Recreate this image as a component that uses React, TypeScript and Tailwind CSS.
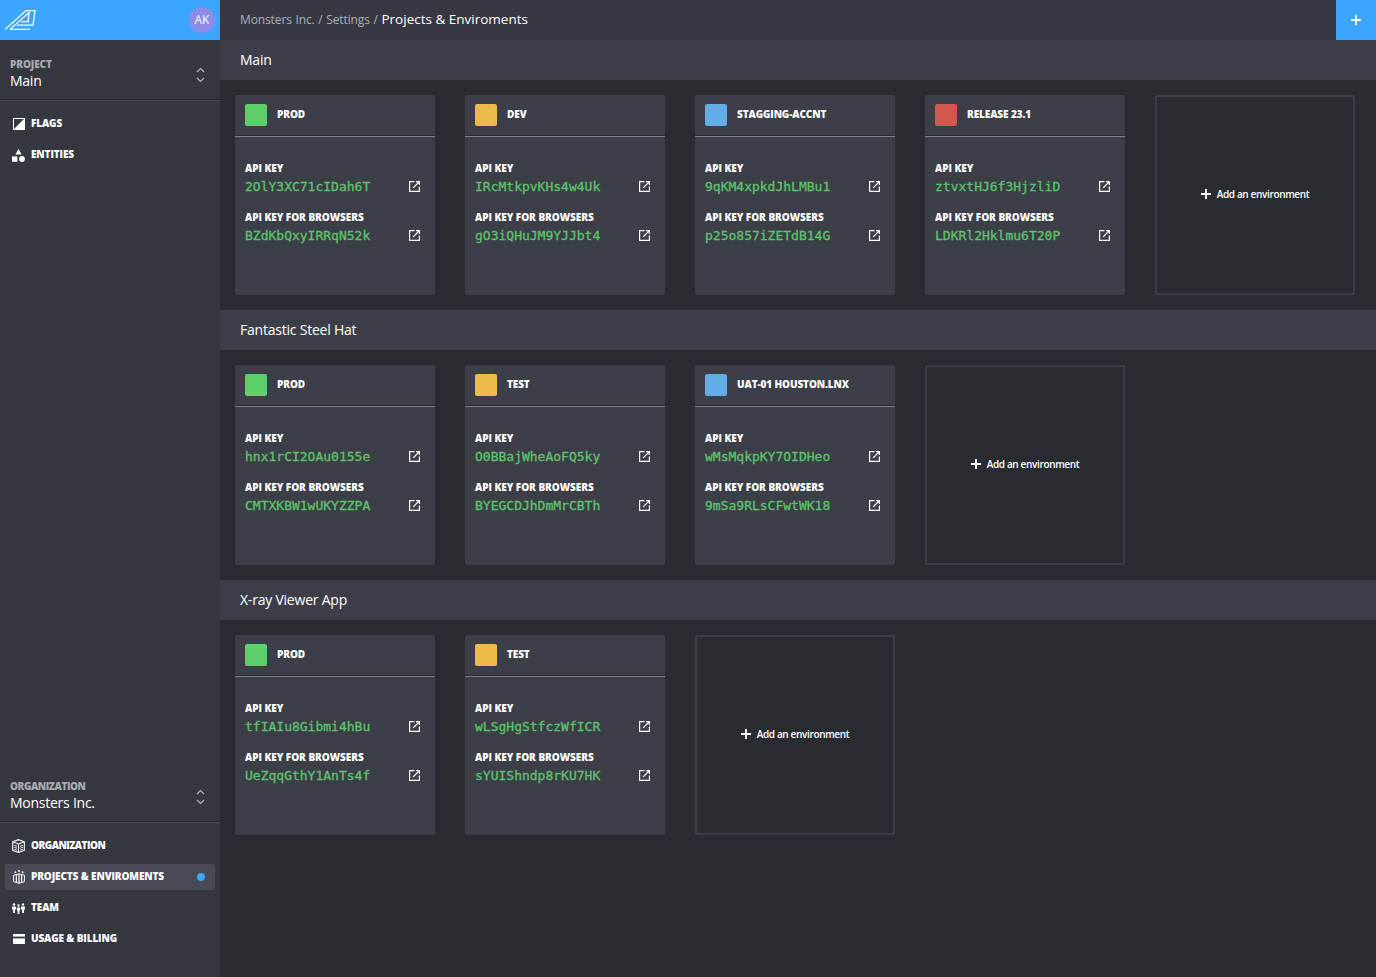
import React from "react";

const SANS = "font-['Open_Sans','Noto_Sans',sans-serif]";

type Env = { name: string; color: string; k1: string; k2: string };
type Project = { title: string; envs: Env[] };

const G = "bg-[#5fcf6b]";
const Y = "bg-[#ecb94a]";
const B = "bg-[#62ade6]";
const R = "bg-[#d2584e]";

const projects: Project[] = [
  {
    title: "Main",
    envs: [
      { name: "PROD", color: G, k1: "2OlY3XC71cIDah6T", k2: "BZdKbQxyIRRqN52k" },
      { name: "DEV", color: Y, k1: "IRcMtkpvKHs4w4Uk", k2: "gO3iQHuJM9YJJbt4" },
      { name: "STAGGING-ACCNT", color: B, k1: "9qKM4xpkdJhLMBu1", k2: "p25o857iZETdB14G" },
      { name: "RELEASE 23.1", color: R, k1: "ztvxtHJ6f3HjzliD", k2: "LDKRl2Hklmu6T20P" },
    ],
  },
  {
    title: "Fantastic Steel Hat",
    envs: [
      { name: "PROD", color: G, k1: "hnx1rCI2OAu0155e", k2: "CMTXKBW1wUKYZZPA" },
      { name: "TEST", color: Y, k1: "O0BBajWheAoFQ5ky", k2: "BYEGCDJhDmMrCBTh" },
      { name: "UAT-01 HOUSTON.LNX", color: B, k1: "wMsMqkpKY7OIDHeo", k2: "9mSa9RLsCFwtWK18" },
    ],
  },
  {
    title: "X-ray Viewer App",
    envs: [
      { name: "PROD", color: G, k1: "tfIAIu8Gibmi4hBu", k2: "UeZqqGthY1AnTs4f" },
      { name: "TEST", color: Y, k1: "wLSgHgStfczWfICR", k2: "sYUIShndp8rKU7HK" },
    ],
  },
];

function ExternalIcon() {
  return (
    <svg width="11" height="11" viewBox="0 0 11 11" fill="none" stroke="#fff" strokeWidth="1.2" className="shrink-0">
      <path d="M5.5 .6H.6v9.8h9.8V5.5" />
      <path d="M4.2 6.8 10 1M7 .6h3.4V4" />
    </svg>
  );
}

function Plus({ size = 10 }: { size?: number }) {
  return (
    <svg width={size} height={size} viewBox="0 0 10 10" stroke="#fff" strokeWidth="1.8" className="shrink-0">
      <path d="M5 0v10M0 5h10" />
    </svg>
  );
}

function Chevrons() {
  return (
    <svg width="9" height="16" viewBox="0 0 9 16" fill="none" stroke="#b4b6bb" strokeWidth="1.2" className="shrink-0">
      <path d="M1 5 4.5 1.5 8 5M1 11l3.5 3.5L8 11" />
    </svg>
  );
}

function Logo() {
  return (
    <svg width="31" height="20" viewBox="0 0 31 20" fill="none" stroke="#fff" strokeWidth="1.25">
      <path d="M0 19.5 21 .6h9L28 15H12" />
      <path d="M5 19.4h20" />
      <path d="M5 19.4 24 2.5 23 11.5H16" />
    </svg>
  );
}

function NavIcon({ kind }: { kind: string }) {
  if (kind === "flags")
    return (
      <svg width="12" height="12" viewBox="0 0 12 12">
        <rect x="0" y="0" width="12" height="12" fill="#fff" />
        <path d="M1 1h10L1 11z" fill="#363840" />
      </svg>
    );
  if (kind === "entities")
    return (
      <svg width="13" height="13" viewBox="0 0 13 13" fill="#fff">
        <path d="M6.5 0 9.6 5.5H3.4z" />
        <rect x="0" y="7.4" width="5.4" height="5.4" />
        <circle cx="10" cy="10" r="2.9" />
      </svg>
    );
  if (kind === "org")
    return (
      <svg width="13" height="14" viewBox="0 0 13 14" fill="none" stroke="#fff" strokeWidth="1.1">
        <path d="M.7 2.8 6.5.7l5.8 2.1v8.6l-5.8 2.1-5.8-2.1z" />
        <path d="M.7 2.8l5.8 2.1 5.8-2.1M6.5 4.9v8.6" />
        <path d="M2.2 6.4 5 7.2M2.2 8.4 5 9.2M2.2 10.4 5 11.2M8 7.2l2.8-.8M8 9.2l2.8-.8M8 11.2l2.8-.8" strokeWidth=".9" />
      </svg>
    );
  if (kind === "projects")
    return (
      <svg width="12" height="14" viewBox="0 0 12 14" fill="none" stroke="#fff" strokeWidth="1">
        <circle cx="6" cy="1" r="1" fill="#fff" stroke="none" />
        <circle cx="2.4" cy="2.2" r=".9" fill="#fff" stroke="none" />
        <circle cx="9.6" cy="2.2" r=".9" fill="#fff" stroke="none" />
        <path d="M.6 5.2 6 3.8l5.4 1.4v6.4L6 13.3.6 11.6z" />
        <path d="M3.4 4.8v7.8M6 4v9.3M8.6 4.8v7.8" strokeWidth="1.2" />
      </svg>
    );
  if (kind === "team")
    return (
      <svg width="13" height="11" viewBox="0 0 13 11" fill="#fff">
        <circle cx="2" cy="1.5" r="1.2" />
        <circle cx="6.5" cy="2.5" r="1.2" />
        <circle cx="11" cy="1.5" r="1.2" />
        <path d="M0 3.6h4v3H3V10H1.2V6.6H0zM4.8 4.6h3.4v3H7.4V11H5.6V7.6h-.8zM9 3.6h4v3h-1V10h-1.8V6.6H9z" />
      </svg>
    );
  return (
    <svg width="12" height="10" viewBox="0 0 12 10" fill="#fff">
      <rect x="0" y="0" width="12" height="2.6" />
      <rect x="0" y="4.4" width="12" height="5.6" />
    </svg>
  );
}

function NavItem({ icon, label, active, tight }: { icon: string; label: string; active?: boolean; tight?: boolean }) {
  return (
    <div className={`mx-[5px] flex h-[26px] items-center rounded-[2px] pl-[7px] pr-[10px] ${active ? "bg-[#484a55]" : ""}`}>
      <span className="flex w-[13px] shrink-0 items-center justify-center">
        <NavIcon kind={icon} />
      </span>
      <span className={`ml-[6px] pb-[2px] text-[10px] font-extrabold text-white ${tight ? "tracking-[-0.5px]" : "tracking-[-0.12px]"}`}>{label}</span>
      {active && <span className="ml-auto size-[8px] rounded-full bg-[#3ba5ff]" />}
    </div>
  );
}

function Switcher({ label, value, tight }: { label: string; value: string; tight?: boolean }) {
  return (
    <div className="flex items-center justify-between pl-[10px] pr-[15px]">
      <div className="flex flex-col">
        <span className={`text-[10px] font-extrabold leading-[12px] text-[#a9abb0] ${tight ? "tracking-[-0.4px]" : "tracking-[-0.1px]"}`}>{label}</span>
        <span className="mt-[1px] text-[14px] leading-[20px] tracking-[-0.25px] text-white">{value}</span>
      </div>
      <Chevrons />
    </div>
  );
}

function Divider() {
  return <div className="h-[2px] border-t border-b border-t-[#22242a] border-b-[#4a4c55]" />;
}

function KeyRow({ label, value }: { label: string; value: string }) {
  return (
    <div>
      <div className="text-[10px] font-extrabold leading-[12px] tracking-[-0.05px] text-white">{label}</div>
      <div className="mt-[4px] flex h-[18px] items-center justify-between pr-[5px]">
        <span className="font-['DejaVu_Sans_Mono',monospace] text-[13px] leading-[18px] text-[#5cc46a] [-webkit-text-stroke:0.3px_#5cc46a]">{value}</span>
        <span className="pb-[1px]"><ExternalIcon /></span>
      </div>
    </div>
  );
}

function EnvCard({ env }: { env: Env }) {
  return (
    <div className="h-[200px] w-[200px] rounded-[2px] bg-[#3c3f48]">
      <div className="flex h-[40px] items-center pl-[10px]">
        <span className={`size-[22px] rounded-[2px] ${env.color}`} />
        <span className="ml-[10px] pb-[1px] text-[10px] font-extrabold tracking-[-0.1px] text-white">{env.name}</span>
      </div>
      <div className="h-[2px] border-t border-b border-t-[#26282d] border-b-[#80838a]" />
      <div className="flex flex-col gap-[15px] pl-[10px] pr-[10px] pt-[25px]">
        <KeyRow label="API KEY" value={env.k1} />
        <KeyRow label="API KEY FOR BROWSERS" value={env.k2} />
      </div>
    </div>
  );
}

function AddCard() {
  return (
    <div className="flex h-[200px] w-[200px] items-center justify-center rounded-[2px] border-2 border-[#3b3e46] pb-[2px]">
      <Plus />
      <span className="ml-[6px] text-[10px] font-semibold tracking-[-0.35px] text-white">Add an environment</span>
    </div>
  );
}

export default function App() {
  return (
    <div className={`flex h-[977px] w-[1376px] overflow-hidden bg-[#292c30] ${SANS}`}>
      <aside className="flex w-[220px] shrink-0 flex-col bg-[#363840]">
        <div className="flex h-[40px] items-center justify-between bg-[#3ba5ff] pl-[5px] pr-[5px]">
          <Logo />
          <span className="flex size-[26px] items-center justify-center rounded-full bg-[#8c8be8] text-[12px] text-white">AK</span>
        </div>
        <div className="pt-[18px] pb-[8px]">
          <Switcher label="PROJECT" value="Main" />
        </div>
        <Divider />
        <div className="flex flex-col gap-[5px] pt-[10px]">
          <NavItem icon="flags" label="FLAGS" />
          <NavItem icon="entities" label="ENTITIES" />
        </div>
        <div className="mt-auto pb-[8px]">
          <Switcher label="ORGANIZATION" value="Monsters Inc." tight />
        </div>
        <Divider />
        <div className="flex flex-col gap-[5px] pb-[25px] pt-[10px]">
          <NavItem icon="org" label="ORGANIZATION" tight />
          <NavItem icon="projects" label="PROJECTS & ENVIROMENTS" active />
          <NavItem icon="team" label="TEAM" />
          <NavItem icon="card" label="USAGE & BILLING" />
        </div>
      </aside>
      <main className="flex min-w-0 flex-1 flex-col">
        <header className="flex h-[40px] shrink-0 items-center justify-between bg-[#363942] pl-[20px]">
          <div className="pb-[2px] text-[12px]">
            <span className="tracking-[-0.12px] text-[#aeb0b5] [word-spacing:0.7px]">Monsters Inc. / Settings / </span>
            <span className="text-[13.5px] font-medium text-white">Projects &amp; Enviroments</span>
          </div>
          <button className="flex h-[40px] w-[40px] items-center justify-center bg-[#3ba5ff]">
            <Plus />
          </button>
        </header>
        {projects.map((p) => (
          <section key={p.title}>
            <div className="flex h-[40px] items-center bg-[#3c3f48] pb-[2px] pl-[20px] text-[14px] font-medium tracking-[-0.22px] text-white">{p.title}</div>
            <div className="flex gap-[30px] p-[15px]">
              {p.envs.map((e) => (
                <EnvCard key={e.name} env={e} />
              ))}
              <AddCard />
            </div>
          </section>
        ))}
      </main>
    </div>
  );
}
